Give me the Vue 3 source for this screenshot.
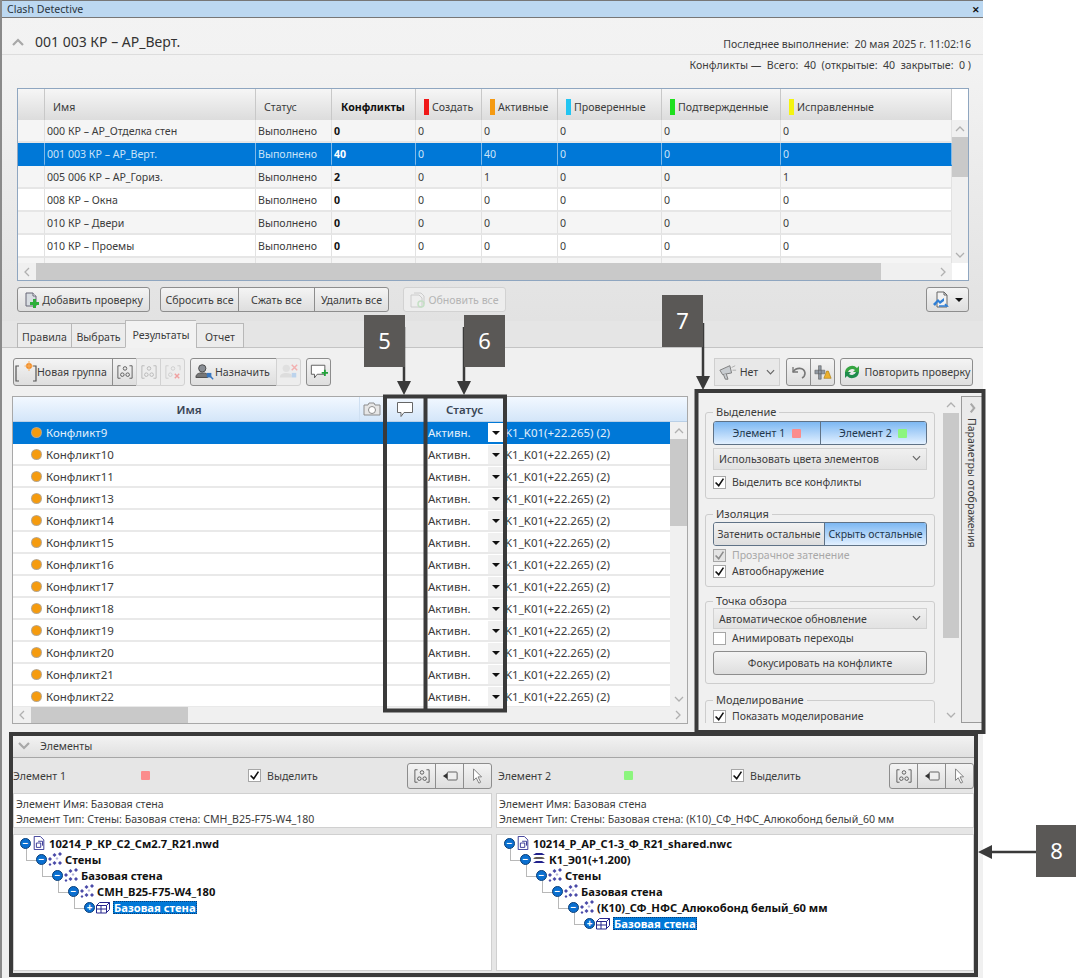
<template>
  <div class="page">
    <!-- общие значки -->
    <svg class="defs" aria-hidden="true">
      <symbol id="i-add" viewBox="0 0 16 16">
        <path d="M2 1h7l3 3v10H2z" fill="#d8dde2" stroke="#667" />
        <path d="M9 1v3h3" fill="#fff" stroke="#667" />
        <path d="M9 7h3v3h3v3h-3v3H9v-3H6v-3h3z" fill="#2eae3a" />
      </symbol>
      <symbol id="i-update" viewBox="0 0 16 16">
        <path d="M1 3h8l3 3v9H1z" fill="#eee" stroke="#ccc" />
        <path d="M4 1h7l3 3v8" fill="none" stroke="#ccc" />
        <circle cx="11" cy="12" r="3" fill="none" stroke="#c5e0c5" stroke-width="1.5" />
      </symbol>
      <symbol id="i-export" viewBox="0 0 18 18">
        <path d="M5 1h7l3 3v12H5z" fill="#f2f2f2" stroke="#666" />
        <path d="M12 1v3h3" fill="none" stroke="#666" />
        <path d="M1 13l5-5 2 2 4-3 0 3-4 3-2-2-3 4z" fill="#2f7fd6" />
        <path d="M7 15h8l-2-2" fill="none" stroke="#2f7fd6" stroke-width="1.6" />
      </symbol>
      <symbol id="i-newgroup" viewBox="0 0 22 22">
        <path d="M4 5H1v15h3M18 5h3v15h-3" fill="none" stroke="#555" stroke-width="1.2" />
        <circle cx="14" cy="5" r="3" fill="#f08a24" />
        <path d="M14 0v10M9.500 5h9" stroke="#f8b060" stroke-width="1" />
      </symbol>
      <symbol id="i-group" viewBox="0 0 18 18">
        <path d="M4 2H1v14h3M14 2h3v14h-3" fill="none" stroke="currentColor" />
        <circle cx="9" cy="5" r="2" fill="none" stroke="currentColor" />
        <circle cx="6" cy="12" r="2" fill="none" stroke="currentColor" />
        <circle cx="12" cy="12" r="2" fill="none" stroke="currentColor" />
      </symbol>
      <symbol id="i-groupdel" viewBox="0 0 18 18">
        <path d="M4 2H1v14h3M14 2h3v5" fill="none" stroke="#ccc" />
        <circle cx="9" cy="5" r="2" fill="none" stroke="#ccc" />
        <circle cx="6" cy="12" r="2" fill="none" stroke="#ccc" />
        <path d="M11 11l5 5M16 11l-5 5" stroke="#f0a0a0" stroke-width="1.6" />
      </symbol>
      <symbol id="i-assign" viewBox="0 0 22 18">
        <circle cx="8" cy="5" r="4" fill="#8a8f96" stroke="#444" />
        <path d="M1 15c0-4 3-5 7-5s6 1 6 3v2z" fill="#777" stroke="#444" />
        <rect x="13" y="10" width="5" height="5" fill="#3a78c0" />
        <path d="M17 14l3 3" stroke="#3a78c0" stroke-width="1.5" />
      </symbol>
      <symbol id="i-unassign" viewBox="0 0 22 18">
        <circle cx="8" cy="5" r="4" fill="#e0e0e0" />
        <path d="M1 15c0-4 3-5 7-5s6 1 6 3v2z" fill="#ddd" />
        <path d="M14 1l6 6M20 1l-6 6" stroke="#f2b0b0" stroke-width="1.6" />
        <rect x="14" y="10" width="5" height="5" fill="#bcd3ec" />
      </symbol>
      <symbol id="i-comment" viewBox="0 0 18 18">
        <path d="M1.500 2.500h15v10H8l-3 4v-4H1.500z" fill="#fff" stroke="#666" />
      </symbol>
      <symbol id="i-commentadd" viewBox="0 0 20 18">
        <path d="M1.500 1.500h15v10H8l-3 4v-4H1.500z" fill="#fff" stroke="#555" />
        <path d="M13 9h2.500V6.500h2V9H20v2h-2.500v2.500h-2V11H13z" fill="#21a23a" />
      </symbol>
      <symbol id="i-camera" viewBox="0 0 18 16">
        <path d="M1 4h4l1-2h5l1 2h5v10H1z" fill="#e6e6e6" stroke="#8c8c8c" />
        <circle cx="9" cy="9" r="3.500" fill="#fff" stroke="#8c8c8c" />
      </symbol>
      <symbol id="i-horn" viewBox="0 0 20 18">
        <path d="M1 7l11-5 2 8-10 2z" fill="#c8ccd0" stroke="#777" />
        <path d="M5 12l2 5h3l-2-6" fill="#c8ccd0" stroke="#777" />
        <path d="M14 4l4-2M15 7h4" stroke="#aaa" />
      </symbol>
      <symbol id="i-undo" viewBox="0 0 18 18">
        <path d="M3 4v5h5" fill="none" stroke="#777" stroke-width="1.300" />
        <path d="M3 9c3-5 11-5 12 1 0 2-1 4-3 5" fill="none" stroke="#777" stroke-width="1.600" />
      </symbol>
      <symbol id="i-sweep" viewBox="0 0 20 18">
        <path d="M1 7h11v4H1zM5 2h3v15H5z" fill="#8f98a2" stroke="#555" stroke-width=".6" />
        <path d="M14 8l-3 8h8l-3-8z" fill="#ecb02c" stroke="#a87a10" stroke-width=".7" />
      </symbol>
      <symbol id="i-refresh" viewBox="0 0 18 18">
        <path d="M2 9a7 7 0 0 1 12-4l2-2v6h-6l2-2a4.500 4.500 0 0 0-7 2z" fill="#35a541" />
        <path d="M16 9a7 7 0 0 1-12 4l-2 2V9h6l-2 2a4.500 4.500 0 0 0 7-2z" fill="#1f8c4d" />
      </symbol>
      <symbol id="i-tag" viewBox="0 0 18 14">
        <rect x="6" y="2.500" width="11" height="9" rx="1" fill="#eee" stroke="#555" />
        <path d="M1 7l5-3.500v7z" fill="#333" />
      </symbol>
      <symbol id="i-cursor" viewBox="0 0 14 18">
        <path d="M2 1v13l3-3 3 6 2-1-3-6h4z" fill="#fff" stroke="#777" />
      </symbol>
      <symbol id="i-doc" viewBox="0 0 14 16">
        <path d="M1.500 .5h7l4 4v11h-11z" fill="#fff" stroke="#26268c" />
        <path d="M4 8h5v5H4zM6 6h5v5" fill="none" stroke="#26268c" />
      </symbol>
      <symbol id="i-dots" viewBox="0 0 14 14">
        <g fill="#4a4aa8">
          <path d="M2 5l2 2-2 2-2-2zM6.500 1l2 2-2 2-2-2zM12 0l2 2-2 2-2-2zM6.500 9l2 2-2 2-2-2zM12 9l2 2-2 2-2-2zM2 11l1.500 1.500L2 14 .5 12.500z" />
        </g>
        <path d="M9 5l1.500 1.500L9 8 7.500 6.500z" fill="#b4b4dc" />
      </symbol>
      <symbol id="i-layers" viewBox="0 0 14 14">
        <path d="M1 3h12L10 1H4zM1 7h12l-3-2H4zM1 11h12l-3-2H4z" fill="#22228c" />
        <path d="M2 6h10" stroke="#a09020" />
      </symbol>
      <symbol id="i-block" viewBox="0 0 14 13">
        <path d="M.5 5h10v7.500H.5zM.5 5l3-3h10l-3 3M13.500 2v7l-3 3M.5 8.500h10M5 5v7.500" fill="#fff" stroke="#26268c" />
      </symbol>
    </svg>

    <div class="window">
      <div class="titlebar">
        <span>Clash Detective</span>
        <span class="close">✕</span>
      </div>

      <div class="test-head">
        <svg class="fold" viewBox="0 0 12 8"><path d="M1 7l5-5 5 5" /></svg>
        <span class="test-name">001 003 КР – АР_Верт.</span>
        <span class="last-run">Последнее выполнение:&nbsp; 20 мая 2025 г. 11:02:16</span>
      </div>
      <div class="summary">Конфликты —&nbsp; Всего:&nbsp; 40&nbsp; (открытые:&nbsp; 40&nbsp; закрытые:&nbsp; 0 )</div>

      <!-- таблица проверок -->
      <div class="tests">
        <div class="tests-left">
          <div class="tests-row tests-header">
            <div class="tc"></div>
            <div class="tc hpad">Имя</div>
            <div class="tc hpad">Статус</div>
            <div class="tc hpad strong">Конфликты</div>
            <div v-for="c in statusCols" :key="c.name" class="tc hstat">
              <i class="swatch" :style="{ background: c.color }"></i>{{ c.name }}
            </div>
          </div>
          <div class="tests-body">
            <div
              v-for="(t, i) in tests"
              :key="t.name"
              class="tests-row"
              :class="{ selected: t.selected, odd: i % 2 === 0 }"
            >
              <div class="tc"></div>
              <div class="tc">{{ t.name }}</div>
              <div class="tc">{{ t.name ? 'Выполнено' : '' }}</div>
              <div class="tc strong">{{ t.total }}</div>
              <div v-for="(v, k) in t.values" :key="k" class="tc">{{ v }}</div>
            </div>
          </div>
          <div class="hscroll">
            <svg class="arr" viewBox="0 0 8 10"><path d="M6 1L2 5l4 4" /></svg>
            <div class="thumb tests-thumb"></div>
            <div class="grow"></div>
            <svg class="arr" viewBox="0 0 8 10"><path d="M2 1l4 4-4 4" /></svg>
          </div>
        </div>
        <div class="tests-right">
          <div class="tests-corner"></div>
          <div class="vscroll">
            <svg class="arr-v" viewBox="0 0 10 8"><path d="M1 6l4-4 4 4" /></svg>
            <div class="thumb tests-vthumb"></div>
            <div class="grow"></div>
            <svg class="arr-v" viewBox="0 0 10 8"><path d="M1 2l4 4 4-4" /></svg>
          </div>
          <div class="corner"></div>
        </div>
      </div>

      <div class="test-actions">
        <button class="btn add-btn"><svg class="ic16"><use href="#i-add" /></svg>Добавить проверку</button>
        <div class="seg reset-seg">
          <button class="btn w78">Сбросить все</button>
          <button class="btn w76">Сжать все</button>
          <button class="btn w75">Удалить все</button>
        </div>
        <button class="btn disabled update-btn"><svg class="ic16"><use href="#i-update" /></svg>Обновить все</button>
        <div class="grow"></div>
        <button class="btn export-btn">
          <svg class="ic18"><use href="#i-export" /></svg><i class="tri"></i>
        </button>
      </div>

      <div class="tabs">
        <div class="tab t-rules">Правила</div>
        <div class="tab t-pick">Выбрать</div>
        <div class="tab t-res active">Результаты</div>
        <div class="tab t-rep">Отчет</div>
      </div>

      <div class="results-area">
        <div class="toolbar">
          <div class="seg">
            <button class="btn tool-new"><svg class="ic22"><use href="#i-newgroup" /></svg>Новая группа</button>
            <button class="btn tool-sq dark-ic"><svg class="ic16"><use href="#i-group" /></svg></button>
            <button class="btn tool-sq disabled pale-ic"><svg class="ic16"><use href="#i-group" /></svg></button>
            <button class="btn tool-sq disabled"><svg class="ic16"><use href="#i-groupdel" /></svg></button>
          </div>
          <div class="seg assign-seg">
            <button class="btn tool-assign"><svg class="ic20"><use href="#i-assign" /></svg>Назначить</button>
            <button class="btn tool-sq disabled"><svg class="ic20"><use href="#i-unassign" /></svg></button>
          </div>
          <button class="btn tool-sq comment-btn"><svg class="ic18"><use href="#i-commentadd" /></svg></button>
          <div class="grow"></div>
          <button class="btn flat horn-btn">
            <svg class="ic18"><use href="#i-horn" /></svg>Нет
            <svg class="chev" viewBox="0 0 10 6"><path d="M1 1l4 4 4-4" /></svg>
          </button>
          <div class="seg undo-seg">
            <button class="btn tool-sq"><svg class="ic18"><use href="#i-undo" /></svg></button>
            <button class="btn tool-sq"><svg class="ic18"><use href="#i-sweep" /></svg></button>
          </div>
          <button class="btn repeat-btn"><svg class="ic18"><use href="#i-refresh" /></svg>Повторить проверку</button>
        </div>

        <div class="main-row">
          <!-- таблица конфликтов -->
          <div class="clashes">
            <div class="clash-head">
              <div class="ch-name">Имя</div>
              <div class="ch-cam"><svg class="ic18"><use href="#i-camera" /></svg></div>
              <div class="ch-com"><svg class="ic18"><use href="#i-comment" /></svg></div>
              <div class="ch-status">Статус</div>
              <div class="grow"></div>
            </div>
            <div class="clash-body">
              <div
                v-for="(c, i) in clashes"
                :key="c"
                class="clash-row"
                :class="{ selected: i === 0 }"
              >
                <div class="cc-name"><i class="dot"></i>{{ c }}</div>
                <div class="cc-cam"></div>
                <div class="cc-com"></div>
                <div class="cc-status">
                  <span>Активн.</span>
                  <span class="drop"><i class="tri"></i></span>
                </div>
                <div class="cc-rest">K1_K01(+22.265) (2)</div>
              </div>
              <div class="clash-vscroll">
                <svg class="arr-v" viewBox="0 0 10 8"><path d="M1 6l4-4 4 4" /></svg>
                <div class="thumb clash-vthumb"></div>
                <div class="grow"></div>
                <svg class="arr-v" viewBox="0 0 10 8"><path d="M1 2l4 4 4-4" /></svg>
              </div>
            </div>
            <div class="hscroll clash-hscroll">
              <svg class="arr" viewBox="0 0 8 10"><path d="M6 1L2 5l4 4" /></svg>
              <div class="thumb clash-thumb"></div>
              <div class="grow"></div>
              <svg class="arr" viewBox="0 0 8 10"><path d="M2 1l4 4-4 4" /></svg>
            </div>
          </div>

          <!-- параметры отображения -->
          <div class="display">
            <div class="display-content">
              <fieldset class="fs fs-select">
                <legend>Выделение</legend>
                <div class="toggle">
                  <div class="on">Элемент 1 <i class="mark red"></i></div>
                  <div class="on">Элемент 2 <i class="mark green"></i></div>
                </div>
                <div class="select">Использовать цвета элементов
                  <svg class="chev" viewBox="0 0 10 6"><path d="M1 1l4 4 4-4" /></svg>
                </div>
                <label class="cb-row"><span class="cb"><svg viewBox="0 0 14 14"><path d="M2 7l4 4 6-9" /></svg></span>Выделить все конфликты</label>
              </fieldset>
              <fieldset class="fs fs-isolate">
                <legend>Изоляция</legend>
                <div class="toggle">
                  <div class="off">Затенить остальные</div>
                  <div class="on">Скрыть остальные</div>
                </div>
                <label class="cb-row muted"><span class="cb"><svg viewBox="0 0 14 14"><path d="M2 7l4 4 6-9" /></svg></span>Прозрачное затенение</label>
                <label class="cb-row"><span class="cb"><svg viewBox="0 0 14 14"><path d="M2 7l4 4 6-9" /></svg></span>Автообнаружение</label>
              </fieldset>
              <fieldset class="fs fs-view">
                <legend>Точка обзора</legend>
                <div class="select">Автоматическое обновление
                  <svg class="chev" viewBox="0 0 10 6"><path d="M1 1l4 4 4-4" /></svg>
                </div>
                <label class="cb-row"><span class="cb"></span>Анимировать переходы</label>
                <button class="btn focus-btn">Фокусировать на конфликте</button>
              </fieldset>
              <fieldset class="fs fs-sim">
                <legend>Моделирование</legend>
                <label class="cb-row"><span class="cb"><svg viewBox="0 0 14 14"><path d="M2 7l4 4 6-9" /></svg></span>Показать моделирование</label>
              </fieldset>
            </div>
            <div class="vscroll display-scroll">
              <svg class="arr-v" viewBox="0 0 10 8"><path d="M1 6l4-4 4 4" /></svg>
              <div class="thumb display-thumb"></div>
              <div class="grow"></div>
              <svg class="arr-v" viewBox="0 0 10 8"><path d="M1 2l4 4 4-4" /></svg>
            </div>
            <div class="side-tab">
              <svg class="side-chev" viewBox="0 0 8 12"><path d="M2 1l4 5-4 5" /></svg>
              <span>Параметры отображения</span>
            </div>
          </div>
        </div>

        <!-- элементы -->
        <div class="elements">
          <div class="elements-head">
            <svg class="fold" viewBox="0 0 12 8"><path d="M1 1l5 5 5-5" /></svg>
            <span>Элементы</span>
          </div>
          <div class="element-cols">
            <div v-for="el in elements" :key="el.title" class="element-col">
              <div class="element-top" :class="el.cls">
                <span class="el-title">{{ el.title }}</span>
                <i class="mark" :class="el.mark"></i>
                <label class="cb-row el-check"><span class="cb"><svg viewBox="0 0 14 14"><path d="M2 7l4 4 6-9" /></svg></span>Выделить</label>
                <div class="seg el-tools">
                  <button class="btn el-tool dark-ic"><svg class="ic16"><use href="#i-group" /></svg></button>
                  <button class="btn el-tool"><svg class="ic16"><use href="#i-tag" /></svg></button>
                  <button class="btn el-tool"><svg class="ic16"><use href="#i-cursor" /></svg></button>
                </div>
              </div>
              <div class="element-desc">
                <div>Элемент Имя: {{ el.name }}</div>
                <div>Элемент Тип: {{ el.type }}</div>
              </div>
              <div class="tree" :class="el.cls">
                <div
                  v-for="(n, i) in el.tree"
                  :key="i"
                  class="tree-row"
                  :style="{ paddingLeft: n.x + 'px' }"
                >
                  <i v-if="i > 0" class="tree-line"></i>
                  <span class="knob">{{ n.leaf ? '+' : '−' }}</span>
                  <svg class="tree-ic"><use :href="'#i-' + n.icon" /></svg>
                  <span class="tree-text" :class="{ picked: n.leaf }">{{ n.text }}</span>
                </div>
              </div>
            </div>
          </div>
        </div>
      </div>
    </div>

    <!-- выноски поверх скриншота -->
    <svg class="callouts" viewBox="0 0 1076 978">
      <g fill="none" stroke="#3a3a3a" stroke-width="4">
        <rect x="385" y="396.500" width="120" height="314" />
        <path d="M425.500 396v315" />
        <rect x="696.500" y="391" width="287" height="341" />
        <path d="M11 975V734h965v241z" />
      </g>
      <g stroke="#3a3a3a" stroke-width="2.500">
        <path d="M404 327v58M464 327v58M703 323v58M1036 852h-46" />
      </g>
      <g fill="#3a3a3a">
        <path d="M397 381h14l-7 14zM457 381h14l-7 14zM696 376h14l-7 14zM992 845v14l-14-7z" />
      </g>
    </svg>
    <div class="badge b5">5</div>
    <div class="badge b6">6</div>
    <div class="badge b7">7</div>
    <div class="badge b8">8</div>
  </div>
</template>

<script setup>
const statusCols = [
  { name: 'Создать', color: '#f01818' },
  { name: 'Активные', color: '#f59a12' },
  { name: 'Проверенные', color: '#22c5f2' },
  { name: 'Подтвержденные', color: '#1ee01e' },
  { name: 'Исправленные', color: '#f4f410' }
]

const tests = [
  { name: '000 КР – АР_Отделка стен', total: 0, values: [0, 0, 0, 0, 0] },
  { name: '001 003 КР – АР_Верт.', total: 40, values: [0, 40, 0, 0, 0], selected: true },
  { name: '005 006 КР – АР_Гориз.', total: 2, values: [0, 1, 0, 0, 1] },
  { name: '008 КР – Окна', total: 0, values: [0, 0, 0, 0, 0] },
  { name: '010 КР – Двери', total: 0, values: [0, 0, 0, 0, 0] },
  { name: '010 КР – Проемы', total: 0, values: [0, 0, 0, 0, 0] },
  { name: '', total: '', values: ['', '', '', '', ''] }
]

const clashes = [9, 10, 11, 13, 14, 15, 16, 17, 18, 19, 20, 21, 22].map((n) => 'Конфликт' + n)

const elements = [
  {
    title: 'Элемент 1',
    cls: 'left',
    mark: 'red',
    name: 'Базовая стена',
    type: 'Стены: Базовая стена: СМН_В25-F75-W4_180',
    tree: [
      { x: 6, icon: 'doc', text: '10214_Р_КР_С2_См2.7_R21.nwd' },
      { x: 22, icon: 'dots', text: 'Стены' },
      { x: 38, icon: 'dots', text: 'Базовая стена' },
      { x: 54, icon: 'dots', text: 'СМН_В25-F75-W4_180' },
      { x: 70, icon: 'block', text: 'Базовая стена', leaf: true }
    ]
  },
  {
    title: 'Элемент 2',
    cls: 'right',
    mark: 'green',
    name: 'Базовая стена',
    type: 'Стены: Базовая стена: (К10)_СФ_НФС_Алюкобонд белый_60 мм',
    tree: [
      { x: 7, icon: 'doc', text: '10214_Р_АР_С1-3_Ф_R21_shared.nwc' },
      { x: 23, icon: 'layers', text: 'К1_Э01(+1.200)' },
      { x: 39, icon: 'dots', text: 'Стены' },
      { x: 55, icon: 'dots', text: 'Базовая стена' },
      { x: 71, icon: 'dots', text: '(К10)_СФ_НФС_Алюкобонд белый_60 мм' },
      { x: 87, icon: 'block', text: 'Базовая стена', leaf: true }
    ]
  }
]
</script>

<style>
html,
body {
  margin: 0;
  background: #fff;
}
</style>

<style scoped>
.page {
  position: relative;
  width: 1076px;
  height: 978px;
  overflow: hidden;
  background: #fff;
  font-family: "Noto Sans", "Open Sans", sans-serif;
  font-size: 10.6px;
  color: #3c3c3c;
}

.defs {
  position: absolute;
  width: 0;
  height: 0;
}

.grow {
  flex: 1;
}

.window {
  width: 981px;
  height: 978px;
  border-left: 2px solid #8a8a8a;
  background: linear-gradient(#f3f3f3 0, #f2f2f2 70px, #e2e2e2 320px);
}

.titlebar {
  height: 16px;
  padding: 0 5px;
  display: flex;
  align-items: center;
  justify-content: space-between;
  background: #bcd8f1;
  border-top: 1px solid #777;
  border-bottom: 1px solid #777;
  color: #2a3540;
}

.close {
  font-size: 9px;
  font-weight: 700;
  color: #111;
  margin-right: -2px;
}

.test-head {
  height: 37px;
  display: flex;
  align-items: center;
  border-bottom: 1px solid #ddd;
  padding: 11px 12px 0 10px;
  box-sizing: border-box;
}

.fold {
  width: 12px;
  height: 8px;
  fill: none;
  stroke: #a8a8a8;
  stroke-width: 2.2;
}

.test-name {
  margin-left: 11px;
  font-size: 14px;
  color: #333;
}

.last-run {
  margin-left: auto;
  margin-top: 4px;
}

.summary {
  height: 33px;
  padding: 3px 12px 0 0;
  box-sizing: border-box;
  text-align: right;
}

/* таблица проверок */
.tests {
  width: 952px;
  height: 193px;
  margin-left: 15px;
  display: flex;
  box-sizing: border-box;
  border: 1px solid #8fa6c0;
  background: #fff;
}

.tests-left {
  width: 934px;
  display: flex;
  flex-direction: column;
}

.tests-right {
  flex: 1;
  display: flex;
  flex-direction: column;
}

.tests-corner {
  height: 31px;
}

.corner {
  height: 17px;
}

.tests-row {
  display: grid;
  grid-template-columns: 27px 211px 76px 84px 66px 76px 104px 119px 1fr;
  height: 23px;
  line-height: 22px;
}

.tests-row.odd {
  background: #f5f5f5;
}

.tests-row .tc {
  padding-left: 2px;
  border-right: 1px solid #e2e2e2;
  border-bottom: 2px solid #e6e6e6;
  white-space: nowrap;
  overflow: hidden;
}

.tests-header {
  height: 31px;
  line-height: 36px;
  background: linear-gradient(#f6f6f6, #dcdcdc);
}

.tests-header .tc {
  border-bottom: 0;
  border-right: 1px solid #c8c8c8;
}

.hpad {
  padding-left: 8px !important;
}

.strong.hpad {
  padding-left: 9px !important;
}

.hstat {
  display: flex;
  align-items: center;
  padding-left: 8px !important;
  padding-top: 4px;
}

.swatch {
  width: 5px;
  height: 16px;
  margin-right: 3px;
}

.strong {
  font-weight: 700;
  color: #111;
}

.tests-body {
  height: 144px;
  overflow: hidden;
}

.tests-row.selected {
  background: #0078d7;
  color: #cbe3f7;
}

.tests-row.selected .tc {
  border-right-color: #7fb8e8;
  border-bottom-color: #0078d7;
}

.tests-row.selected .strong {
  color: #fff;
}

.hscroll {
  height: 17px;
  display: flex;
  align-items: center;
  background: #f0f0f0;
}

.vscroll {
  flex: 1;
  display: flex;
  flex-direction: column;
  align-items: center;
  background: #f0f0f0;
}

.thumb {
  background: #c9c9c9;
}

.arr {
  width: 8px;
  height: 10px;
  margin: 0 5px;
  flex: none;
  fill: none;
  stroke: #b0b0b0;
  stroke-width: 1.3;
}

.arr-v {
  width: 10px;
  height: 8px;
  margin: 5px 0 4px;
  flex: none;
  fill: none;
  stroke: #b0b0b0;
  stroke-width: 1.3;
}

.tests-thumb {
  width: 845px;
  height: 100%;
}

.tests-vthumb {
  width: 100%;
  height: 40px;
}

/* кнопки */
.btn {
  display: inline-flex;
  align-items: center;
  justify-content: center;
  gap: 2px;
  height: 25px;
  padding: 0;
  box-sizing: border-box;
  font: inherit;
  color: #3c3c3c;
  background: linear-gradient(#f4f4f4, #dedede);
  border: 1px solid #8d8d8d;
  border-radius: 3px;
  white-space: nowrap;
}

.btn.disabled {
  color: #b4b4b4;
  background: #ededed;
  border-color: #d2d2d2;
}

.btn.flat {
  border-color: #cfcfcf;
  border-radius: 0;
}

.seg {
  display: flex;
}

.seg .btn {
  border-radius: 0;
  margin-right: -1px;
}

.seg .btn:first-child {
  border-radius: 3px 0 0 3px;
}

.seg .btn:last-child {
  border-radius: 0 3px 3px 0;
  margin-right: 0;
}

.ic16 {
  width: 16px;
  height: 16px;
  flex: none;
}

.ic18 {
  width: 18px;
  height: 18px;
  flex: none;
}

.ic20 {
  width: 20px;
  height: 18px;
  flex: none;
}

.ic22 {
  width: 22px;
  height: 22px;
  flex: none;
}

.dark-ic {
  color: #555;
}

.pale-ic {
  color: #ccc;
}

.test-actions {
  height: 25px;
  margin: 6px 14px 0 15px;
  display: flex;
}

.add-btn {
  width: 133px;
}

.reset-seg {
  margin-left: 10px;
}

.w78 {
  width: 79px;
}

.w76 {
  width: 77px;
}

.w75 {
  width: 75px;
}

.update-btn {
  width: 103px;
  margin-left: 14px;
}

.export-btn {
  width: 43px;
  gap: 5px;
}

.tri {
  display: inline-block;
  width: 0;
  height: 0;
  border-left: 4px solid transparent;
  border-right: 4px solid transparent;
  border-top: 4px solid #111;
}

/* вкладки */
.tabs {
  height: 27px;
  margin-top: 9px;
  padding-left: 15px;
  display: flex;
  align-items: flex-end;
  box-sizing: border-box;
  border-bottom: 1px solid #c4c4c4;
  background: #e5e5e5;
}

.tab {
  height: 25px;
  line-height: 26px;
  text-align: center;
  box-sizing: border-box;
  margin-bottom: -1px;
  border: 1px solid #b8b8b8;
  border-right: 0;
  background: #ececec;
}

.t-rules,
.t-pick {
  width: 54px;
}

.t-res {
  width: 71px;
}

.t-rep {
  width: 48px;
  border-right: 1px solid #b8b8b8;
}

.tab.active {
  height: 28px;
  line-height: 28px;
  background: #f2f2f2;
  border-bottom-color: #f2f2f2;
}

.results-area {
  background: #f0f0f0;
  height: 631px;
  overflow: hidden;
}

.toolbar {
  height: 28px;
  margin: 10px 10px 0 11px;
  display: flex;
  align-items: stretch;
}

.toolbar .btn {
  height: 28px;
}

.tool-new {
  width: 100px;
  justify-content: flex-start;
  padding-left: 1px;
  gap: 0;
}

.tool-sq {
  width: 25px;
}

.assign-seg {
  margin-left: 5px;
}

.tool-assign {
  width: 87px;
  justify-content: flex-start;
  padding-left: 4px;
  gap: 0;
}

.comment-btn {
  margin-left: 5px;
}

.horn-btn {
  width: 66px;
  gap: 3px;
  background: #e8e8e8;
}

.chev {
  width: 9px;
  height: 6px;
  margin-left: 5px;
  fill: none;
  stroke: #666;
  stroke-width: 1.3;
}

.undo-seg {
  margin-left: 6px;
}

.repeat-btn {
  width: 133px;
  margin-left: 5px;
  gap: 4px;
}

.main-row {
  height: 335px;
  margin-top: 10px;
  padding-left: 10px;
  display: flex;
  align-items: flex-start;
}

/* таблица конфликтов */
.clashes {
  position: relative;
  width: 676px;
  height: 328px;
  box-sizing: border-box;
  border: 1px solid #a8a8a8;
  background: #fff;
  display: flex;
  flex-direction: column;
  font-size: 11.5px;
}

.clash-head {
  height: 25px;
  flex: none;
  display: flex;
  align-items: center;
  background: linear-gradient(#f2f8ff, #d4e6f9);
  border-bottom: 1px solid #b9cfe6;
  color: #3a4656;
  font-weight: 600;
  box-sizing: border-box;
}

.ch-name {
  width: 347px;
  padding-left: 6px;
  box-sizing: border-box;
  text-align: center;
  border-right: 1px solid #cfe0f2;
  height: 100%;
  line-height: 25px;
}

.ch-cam {
  width: 24px;
  display: flex;
  justify-content: center;
}

.ch-com {
  width: 41px;
  display: flex;
  justify-content: center;
}

.ch-status {
  width: 79px;
  text-align: center;
}

.clash-body {
  position: relative;
  flex: 1;
  overflow: hidden;
  padding-right: 17px;
}

.clash-row {
  display: flex;
  height: 22px;
  line-height: 21px;
  box-sizing: border-box;
  border-bottom: 2px solid #e9e9e9;
  white-space: nowrap;
}

.clash-row.selected {
  background: #0078d7;
  color: #e2f0fb;
  border-bottom-color: #0078d7;
}

.cc-name {
  width: 347px;
  display: flex;
  align-items: center;
  padding-left: 19px;
  box-sizing: border-box;
}

.dot {
  width: 9px;
  height: 9px;
  margin-right: 5px;
  border-radius: 50%;
  background: #f59b0e;
  box-shadow: 0 0 0 1px #b9a68a;
}

.cc-cam {
  width: 24px;
}

.cc-com {
  width: 41px;
}

.cc-status {
  width: 79px;
  display: flex;
  justify-content: space-between;
  box-sizing: border-box;
  padding-left: 3px;
}

.drop {
  width: 15px;
  margin-top: 1px;
  height: 19px;
  margin-right: 1px;
  display: flex;
  align-items: center;
  justify-content: center;
  background: #f0f0f0;
}

.clash-row.selected .drop {
  background: #fff;
}

.cc-rest {
  padding-left: 1px;
}

.clash-vscroll {
  position: absolute;
  top: 0;
  right: 0;
  bottom: 0;
  width: 17px;
  display: flex;
  flex-direction: column;
  align-items: center;
  background: #f0f0f0;
}

.clash-vthumb {
  width: 100%;
  height: 87px;
}

.clash-hscroll {
  flex: none;
  height: 16px;
}

.clash-thumb {
  width: 157px;
  height: 100%;
}

/* параметры отображения */
.display {
  width: 285px;
  height: 338px;
  margin: -3px 0 0 9px;
  display: flex;
  overflow: hidden;
  background: #f0f0f0;
  font-size: 10.5px;
}

.display-content {
  width: 246px;
  flex: none;
  padding: 12px 0 0 8px;
  box-sizing: border-box;
  height: 330px;
  overflow: hidden;
}

.fs {
  width: 230px;
  margin: 0;
  padding: 2px 7px 0;
  box-sizing: border-box;
  border: 1px solid #cdcdcd;
  border-radius: 3px;
  display: flex;
  flex-direction: column;
}

.fs legend {
  padding: 0 3px;
  margin-left: 0;
  line-height: 14px;
  font-size: 11px;
}

.fs-select {
  height: 94px;
  margin-bottom: 8px;
}

.fs-isolate {
  height: 80px;
  margin-bottom: 7px;
  padding-top: 1px;
}

.fs-view {
  height: 90px;
  margin-bottom: 9px;
  padding-top: 0;
}

.fs-sim {
  height: 60px;
  padding-top: 1px;
}

.toggle {
  display: flex;
  height: 24px;
  line-height: 23px;
  text-align: center;
  border: 1px solid #5f7286;
  border-radius: 3px;
  box-sizing: border-box;
  flex: none;
  overflow: hidden;
}

.toggle > div {
  flex: 1;
  white-space: nowrap;
}

.toggle .on {
  background: linear-gradient(#7db8f3, #e2f0ff);
  color: #23384d;
}

.toggle .on + .on {
  border-left: 1px solid #5f7286;
}

.toggle .off {
  background: linear-gradient(#f2f2f2, #dedede);
  border-right: 1px solid #5f7286;
  flex: none;
  width: 110px;
}

.mark {
  display: inline-block;
  width: 9px;
  height: 9px;
  border-radius: 1px;
  margin-left: 4px;
  vertical-align: -1px;
}

.mark.red {
  background: #fb8c8c;
}

.mark.green {
  background: #8cf57e;
}

.select {
  height: 22px;
  line-height: 20px;
  margin-top: 3px;
  padding: 0 5px;
  position: relative;
  box-sizing: border-box;
  flex: none;
  background: linear-gradient(#f0f0f0, #e2e2e2);
  border: 1px solid #d2d2d2;
}

.select .chev {
  position: absolute;
  right: 5px;
  top: 6px;
}

.cb-row {
  display: flex;
  align-items: center;
  height: 16px;
  white-space: nowrap;
}

.cb {
  width: 13px;
  height: 13px;
  margin-right: 6px;
  flex: none;
  background: #fff;
  border: 1px solid #a6a6a6;
  box-sizing: border-box;
}

.cb svg {
  display: block;
  width: 11px;
  height: 11px;
  fill: none;
  stroke: #111;
  stroke-width: 2;
}

.cb-row.muted {
  color: #a8a8a8;
}

.cb-row.muted .cb {
  background: #e4e4e4;
}

.cb-row.muted .cb svg {
  stroke: #8c8c8c;
}

.fs-select .cb-row {
  margin-top: 4px;
}

.fs-isolate .cb-row.muted {
  margin-top: 1px;
}

.fs-view .select {
  margin-top: 0;
  height: 21px;
}

.fs-view .cb-row {
  margin-top: 1px;
}

.focus-btn {
  width: 100%;
  height: 24px;
  margin-top: 5px;
  flex: none;
}

.display-scroll {
  width: 16px;
  flex: none;
  margin-top: 3px;
  height: 327px;
}

.display-thumb {
  width: 100%;
  height: 225px;
}

.side-tab {
  width: 21px;
  height: 327px;
  margin: 3px 0 0 2px;
  flex: none;
  border: 1px solid #9a9a9a;
  border-right: 0;
  box-sizing: border-box;
  background: #eaeaea;
  display: flex;
  flex-direction: column;
  align-items: center;
}

.side-chev {
  width: 7px;
  height: 12px;
  margin: 5px 0 4px;
  fill: none;
  stroke: #a8a8a8;
  stroke-width: 2.4;
}

.side-tab span {
  writing-mode: vertical-rl;
  white-space: nowrap;
}

/* элементы */
.elements {
  width: 963px;
  height: 242px;
  margin: 3px 0 0 10px;
  background: #e6e6e6;
}

.elements-head {
  height: 24px;
  display: flex;
  align-items: center;
  gap: 10px;
  padding-left: 6px;
  box-sizing: border-box;
  background: linear-gradient(#f4f4f4, #e0e0e0);
  border-bottom: 1px solid #a6a6a6;
}

.element-cols {
  display: grid;
  grid-template-columns: 479px 478px;
  gap: 4px;
  padding-left: 1px;
}

.element-top {
  height: 35px;
  display: flex;
  align-items: center;
  position: relative;
}

.el-title {
  width: 128px;
  padding-top: 1px;
}

.element-top.right .el-title {
  padding-left: 2px;
  width: 126px;
}

.element-top .mark {
  margin: 0;
}

.el-check {
  margin-left: 98px;
}

.el-tools {
  margin-left: auto;
}

.el-tool {
  width: 29px;
  height: 26px;
}

.element-desc {
  height: 35px;
  padding: 3px 2px 0;
  box-sizing: border-box;
  background: #fff;
  border: 1px solid #d0d0d0;
  line-height: 15px;
  font-size: 10.6px;
  white-space: nowrap;
}

.tree {
  height: 137px;
  margin-top: 6px;
  box-sizing: border-box;
  background: #fff;
  border: 1px solid #d0d0d0;
  font-weight: 700;
  font-size: 11.2px;
  color: #111;
}

.tree-row {
  position: relative;
  height: 16px;
  display: flex;
  align-items: center;
  white-space: nowrap;
}

.knob {
  width: 11px;
  height: 11px;
  flex: none;
  border-radius: 50%;
  background: #0a6fd0;
  border: 1px solid #0b3f78;
  box-sizing: border-box;
  color: #fff;
  font-size: 10px;
  line-height: 8px;
  text-align: center;
  font-weight: 700;
  z-index: 1;
}

.tree-ic {
  width: 14px;
  height: 14px;
  margin: 0 3px 0 1px;
  flex: none;
}

.tree-text.picked {
  background: #0078d7;
  color: #fff;
  outline: 1px dotted #0b3f78;
  outline-offset: -1px;
  padding: 0 1px;
  line-height: 13px;
}

.tree-line {
  position: absolute;
  width: 15px;
  height: 11px;
  margin-left: -10px;
  top: -2px;
  border-left: 1px solid #b8b8b8;
  border-bottom: 1px solid #b8b8b8;
}

/* выноски */
.callouts {
  position: absolute;
  left: 0;
  top: 0;
  width: 1076px;
  height: 978px;
  pointer-events: none;
}

.badge {
  position: absolute;
  width: 41px;
  height: 52px;
  line-height: 50px;
  text-align: center;
  background: #5a5856;
  color: #fff;
  font-size: 22px;
}

.b5 {
  left: 364px;
  top: 315px;
}

.b6 {
  left: 464px;
  top: 315px;
}

.b7 {
  left: 662px;
  top: 295px;
}

.b8 {
  left: 1036px;
  top: 825px;
}
</style>
